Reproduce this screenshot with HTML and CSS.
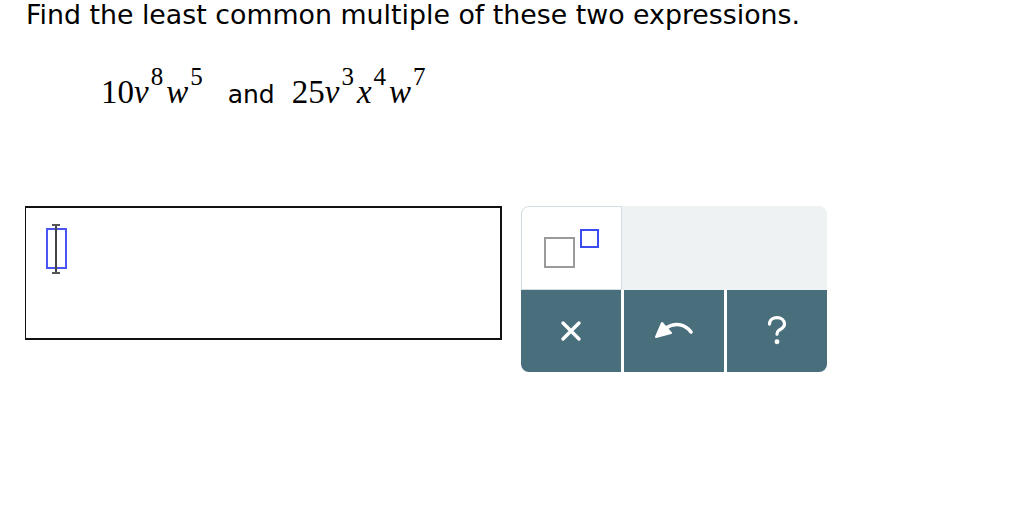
FILE: index.html
```html
<!DOCTYPE html>
<html>
<head>
<meta charset="utf-8">
<link rel="stylesheet" href="styles.css">
</head>
<body>
<div class="page">
  <h1 class="prompt">Find the least common multiple of these two expressions.</h1>
  <div class="expr">
    <span class="m">10<i>v</i><sup>8</sup><i>w</i><sup>5</sup></span>
    <span class="and">and</span>
    <span class="m">25<i>v</i><sup>3</sup><i>x</i><sup>4</sup><i>w</i><sup>7</sup></span>
  </div>
  <div class="work">
    <div class="answer">
      <div class="slot"><span class="caret"></span></div>
    </div>
    <div class="pad">
      <div class="pad-top">
        <button class="key key-sup" aria-label="superscript">
          <svg width="60" height="40" viewBox="0 0 60 40">
            <rect x="2" y="9" width="29" height="29" fill="none" stroke="#9a9a9a" stroke-width="2"/>
            <rect x="38" y="1" width="17" height="17" fill="none" stroke="#3a4bf2" stroke-width="2"/>
          </svg>
        </button>
        <div class="pad-fill"></div>
      </div>
      <div class="pad-bottom">
        <button class="act" aria-label="clear">
          <svg width="22" height="22" viewBox="0 0 22 22"><path d="M3 3 L19 19 M19 3 L3 19" stroke="#fff" stroke-width="3.4" stroke-linecap="round"/></svg>
        </button>
        <button class="act" aria-label="undo">
          <svg width="46" height="24" viewBox="0 0 46 24"><path d="M15 9 C24 3 34 5 40 13" fill="none" stroke="#fff" stroke-width="3.6" stroke-linecap="round"/><path d="M5 18 L11 4 L20 14 Z" fill="#fff" stroke="#fff" stroke-width="2" stroke-linejoin="round"/></svg>
        </button>
        <button class="act" aria-label="help">
          <svg width="22" height="30" viewBox="0 0 20 28"><path d="M3 7.5 C3 3.5 6.5 1.5 10 1.5 C14 1.5 17 4 17 7.5 C17 11 14 12 11.5 13.5 C10.3 14.3 10 15.3 10 17" fill="none" stroke="#fff" stroke-width="3" stroke-linecap="round"/><circle cx="10" cy="24" r="2.3" fill="#fff"/></svg>
        </button>
      </div>
    </div>
  </div>
</div>
</body>
</html>
```

FILE: styles.css
```css
html, body {
  margin: 0;
  padding: 0;
  background: #fff;
}

.page {
  padding: 0 0 0 25px;
  font-family: "DejaVu Sans", Verdana, sans-serif;
  color: #000;
}

.prompt {
  margin: 0;
  padding: 0 0 0 1px;
  font-size: 26.8px;
  font-weight: normal;
  line-height: 30px;
}

.expr {
  margin-top: 40px;
  padding-left: 76px;
  height: 44px;
  display: flex;
  align-items: baseline;
}

.m {
  font-family: "Liberation Serif", "Times New Roman", serif;
  font-size: 33px;
  line-height: 44px;
  white-space: nowrap;
}

.m i {
  font-style: italic;
  padding-right: 1px;
}

.m sup {
  font-size: 25px;
  vertical-align: 0;
  position: relative;
  top: -18px;
  padding: 0 3px 0 1px;
}

.and {
  font-size: 25px;
  margin: 0 17px 0 22px;
}

.work {
  display: flex;
  gap: 19px;
  margin-top: 92px;
}

.answer {
  box-sizing: border-box;
  width: 477px;
  height: 134px;
  border: 2px solid #111;
  border-left-width: 1px;
  padding: 20px 0 0 20px;
}

.slot {
  position: relative;
  box-sizing: border-box;
  width: 21px;
  height: 41px;
  border: 2px solid #4a55f3;
}

.caret {
  position: absolute;
  left: 7px;
  top: -6px;
  width: 2px;
  height: 50px;
  background: #444;
}

.caret::before,
.caret::after {
  content: "";
  position: absolute;
  left: -3px;
  width: 8px;
  height: 2px;
  background: #555;
}

.caret::before { top: 0; }
.caret::after { bottom: 0; }

.pad {
  width: 306px;
  height: 166px;
  border-radius: 8px;
  overflow: hidden;
  display: flex;
  flex-direction: column;
  background: #eef2f3;
}

.pad-top {
  display: flex;
  height: 84px;
}

.key {
  width: 101px;
  height: 84px;
  box-sizing: border-box;
  border: 1px solid #d3dde1;
  border-top-left-radius: 8px;
  background: #fff;
  padding: 12px 0 0 0;
  display: flex;
  justify-content: center;
  align-items: flex-start;
}

.key svg {
  margin-left: 2px;
  margin-top: 10px;
}

.pad-fill {
  flex: 1;
}

.pad-bottom {
  flex: 1;
  display: flex;
  gap: 3px;
  background: #fff;
}

.act {
  flex: 1;
  border: 0;
  padding: 0;
  margin: 0;
  background: #4a6f7c;
  display: flex;
  align-items: center;
  justify-content: center;
}
```
